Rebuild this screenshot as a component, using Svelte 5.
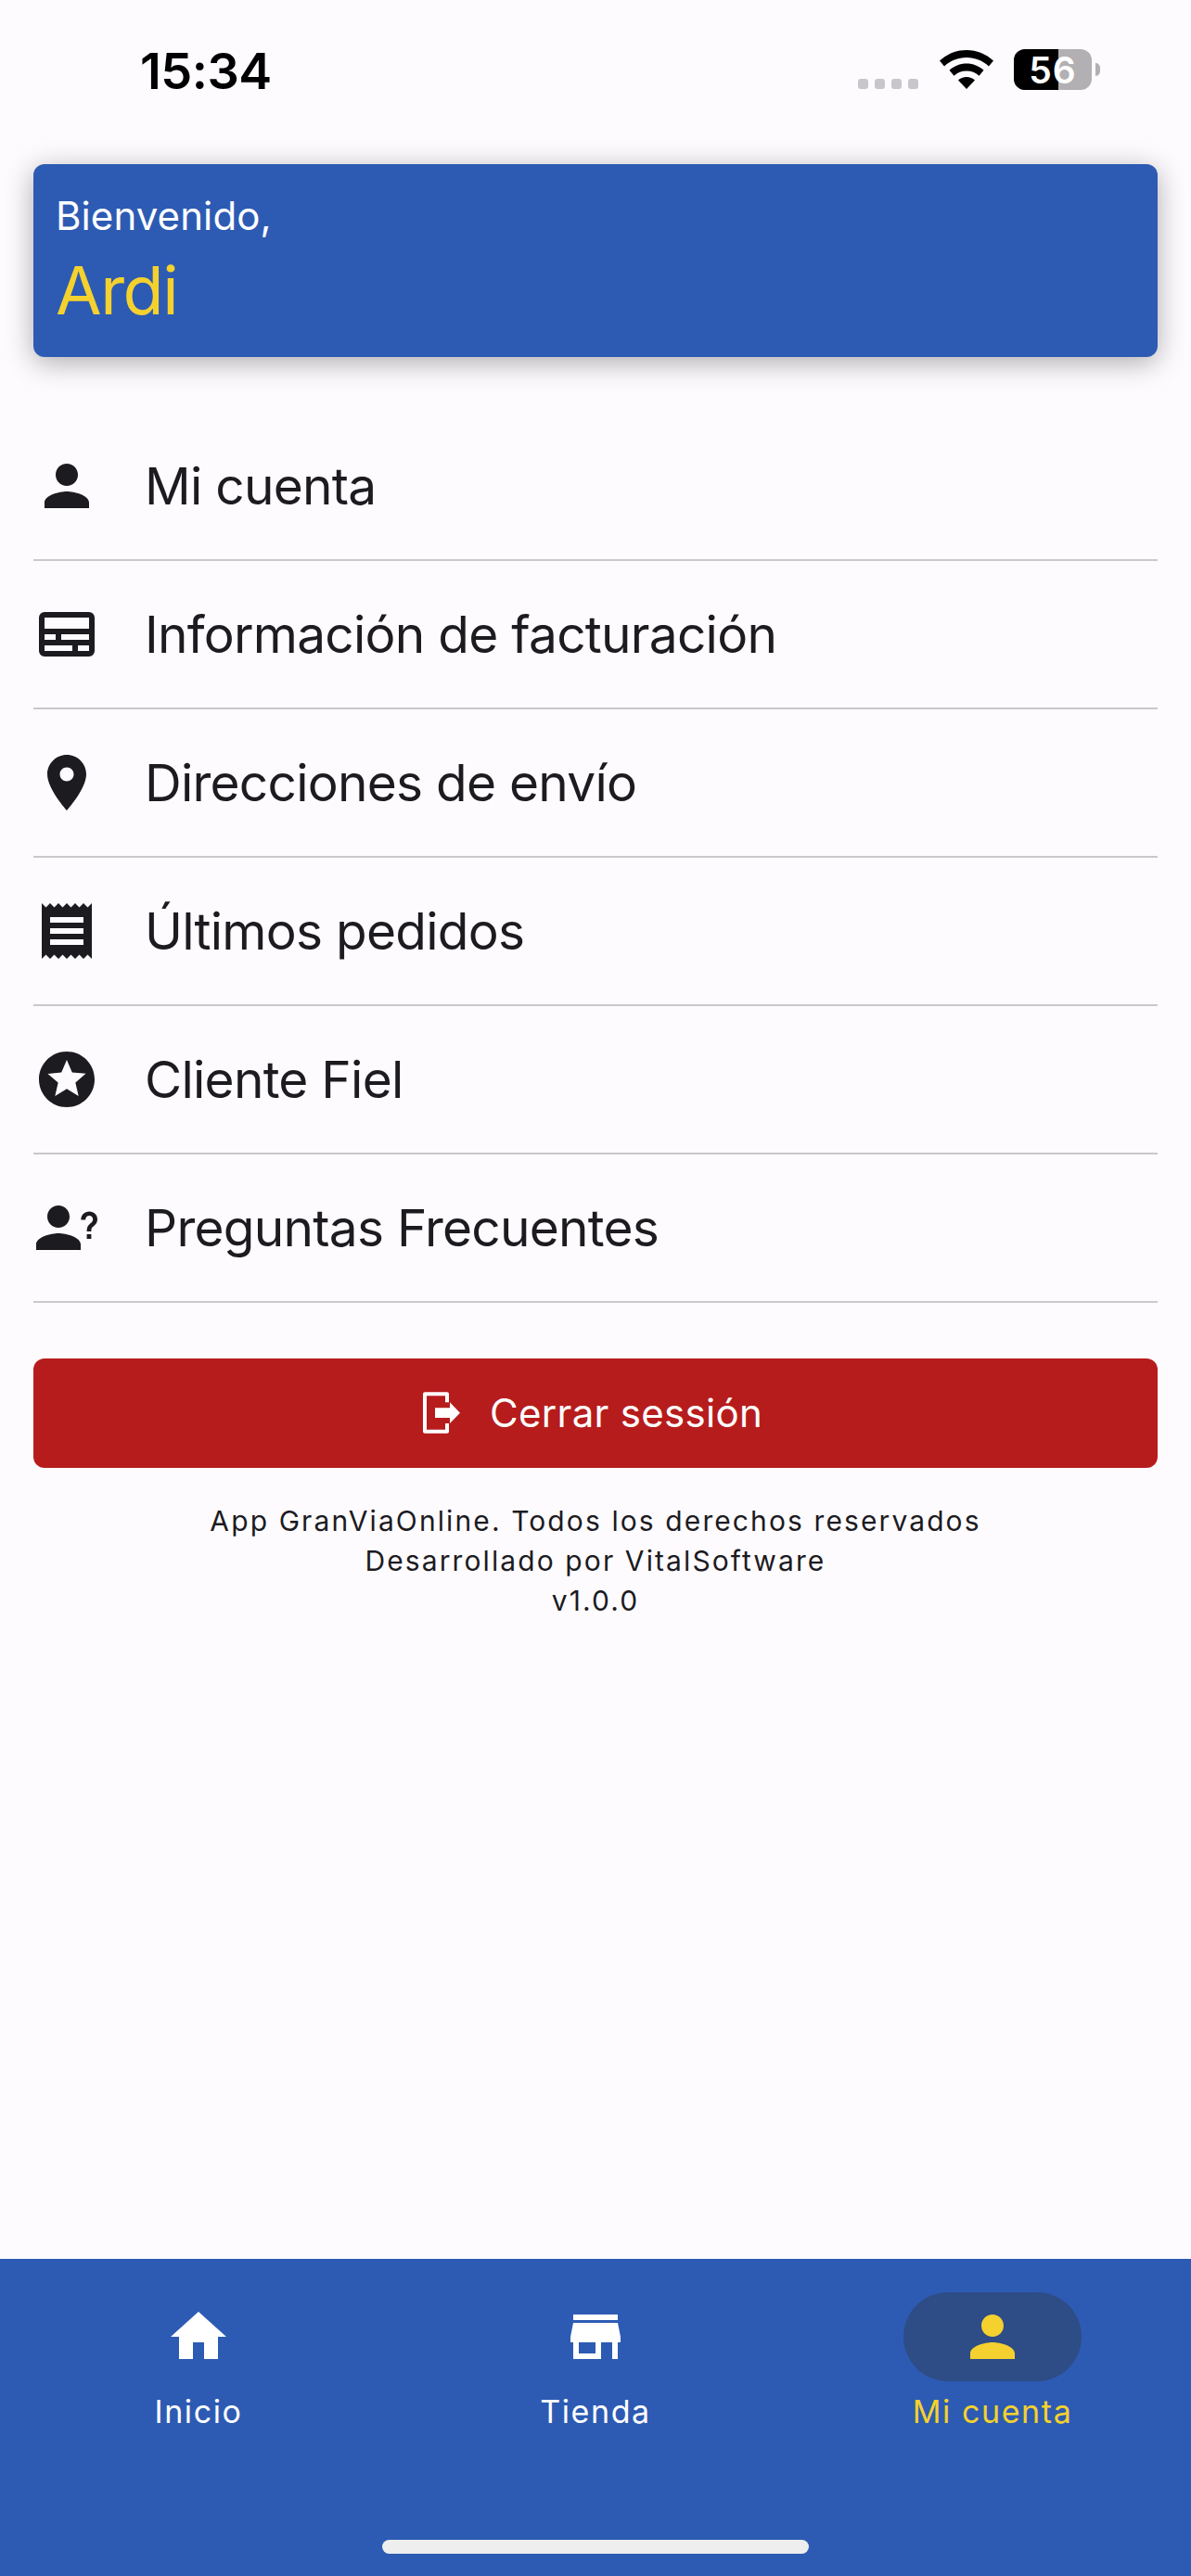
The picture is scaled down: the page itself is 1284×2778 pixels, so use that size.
<script>
  const rows = [
    { label: "Mi cuenta", d: "M12 12c2.21 0 4-1.79 4-4s-1.79-4-4-4-4 1.79-4 4 1.79 4 4 4zm0 2c-2.67 0-8 1.34-8 4v2h16v-2c0-2.66-5.33-4-8-4z" },
    { label: "Información de facturación", d: "M4 4h16a2 2 0 0 1 2 2v12a2 2 0 0 1-2 2H4a2 2 0 0 1-2-2V6a2 2 0 0 1 2-2zm0 2v4h16V6H4zm0 6v2h4v-2H4zm6 0v2h10v-2H10zM4 16v2h10v-2H4zm12 0v2h4v-2h-4z" },
    { label: "Direcciones de envío", d: "M12 2C8.13 2 5 5.13 5 9c0 5.25 7 13 7 13s7-7.75 7-13c0-3.87-3.13-7-7-7zm0 9.5c-1.38 0-2.5-1.12-2.5-2.5s1.12-2.5 2.5-2.5 2.5 1.12 2.5 2.5-1.12 2.5-2.5 2.5z" },
    { label: "Últimos pedidos", d: "M18 17H6v-2h12v2zm0-4H6v-2h12v2zm0-4H6V7h12v2zM3 22l1.5-1.5L6 22l1.5-1.5L9 22l1.5-1.5L12 22l1.5-1.5L15 22l1.5-1.5L18 22l1.5-1.5L21 22V2l-1.5 1.5L18 2l-1.5 1.5L15 2l-1.5 1.5L12 2l-1.5 1.5L9 2 7.5 3.5 6 2 4.5 3.5 3 2v20z" },
    { label: "Cliente Fiel", d: "M11.99 2C6.47 2 2 6.48 2 12s4.47 10 9.99 10C17.52 22 22 17.52 22 12S17.52 2 11.99 2zm4.24 16L12 15.45 7.77 18l1.12-4.81-3.73-3.23 4.92-.42L12 5l1.92 4.53 4.92.42-3.73 3.23L16.23 18z" },
    { label: "Preguntas Frecuentes", d: "M9 12c2.21 0 4-1.79 4-4s-1.79-4-4-4-4 1.79-4 4 1.79 4 4 4zm0 2c-2.67 0-8 1.34-8 4v2h16v-2c0-2.66-5.33-4-8-4zM19.2 14.300h1.600V16h-1.600zM17.100 9.200c0-1.800 1.300-3 3-3 1.700 0 2.900 1.200 2.900 2.800 0 1.100-.6 1.800-1.300 2.400-.7.500-.9.800-.9 1.600v.3h-1.600V13c0-1.300.5-1.900 1.200-2.500.7-.5 1-.9 1-1.500 0-.7-.5-1.300-1.300-1.300s-1.400.6-1.400 1.500h-1.600z" },
  ];

  const tabs = [
    { label: "Inicio", d: "M10 20v-6h4v6h5v-8h3L12 3 2 12h3v8z" },
    { label: "Tienda", d: "M20 4H4v2h16V4zm1 10v-2l-1-5H4l-1 5v2h1v6h10v-6h4v6h2v-6h1zm-9 4H6v-4h6v4z" },
    { label: "Mi cuenta", d: rows[0].d, active: true },
  ];
</script>

<div class="page">
  <header class="status">
    <span class="time">15:34</span>
    <div class="indicators">
      <div class="signal"><i></i><i></i><i></i><i></i></div>
      <svg class="wifi" viewBox="0 0 58 42" aria-hidden="true">
        <path d="M29 0C18 0 8 4.200 0 11.500l5 6C11.500 11.500 20 8 29 8s17.500 3.500 24 9.500l5-6C50 4.200 40 0 29 0zM29 14.500c-7 0-13.500 2.700-18.500 7.200l5 6c3.500-3.300 8.300-5.200 13.500-5.200s10 1.900 13.500 5.200l5-6C42.500 17.200 36 14.500 29 14.500zM29 29c-3.500 0-6.700 1.300-9 3.500L29 42l9-9.500C35.700 30.300 32.500 29 29 29z" />
      </svg>
      <div class="battery">
        <div class="cell"><b class="fill"></b><span>56</span></div>
        <b class="nub"></b>
      </div>
    </div>
  </header>

  <section class="welcome">
    <p class="hello">Bienvenido,</p>
    <p class="name">Ardi</p>
  </section>

  <nav class="menu">
    {#each rows as row}
      <div class="row">
        <svg class="icon" viewBox="0 0 24 24" aria-hidden="true"><path fill-rule="evenodd" d={row.d} /></svg>
        <span>{row.label}</span>
      </div>
    {/each}
  </nav>

  <button class="logout">
    <svg class="logout-icon" viewBox="0 0 120 133" aria-hidden="true">
      <path class="door" d="M78 33V6H6v121h72v-26" />
      <path d="M39 51h48V33l33 34-33 34V83H39z" />
    </svg>
    <span>Cerrar sessión</span>
  </button>

  <footer class="legal">
    <p>App GranViaOnline. Todos los derechos reservados</p>
    <p>Desarrollado por VitalSoftware</p>
    <p>v1.0.0</p>
  </footer>

  <div class="tabbar">
    {#each tabs as tab}
      <div class="tab" class:active={tab.active}>
        <div class="pill">
          <svg class="icon" viewBox="0 0 24 24" aria-hidden="true"><path d={tab.d} /></svg>
        </div>
        <span>{tab.label}</span>
      </div>
    {/each}
    <div class="home-bar"></div>
  </div>
</div>

<style>
  :global(body) {
    margin: 0;
    background: #fefbff;
  }

  .page {
    display: flex;
    flex-direction: column;
    height: 2778px;
    background: #fefbff;
    color: #1c1b1f;
    font-family: Inter, "Liberation Sans", sans-serif;
  }

  p {
    margin: 0;
  }

  .status {
    display: flex;
    flex: none;
    justify-content: space-between;
    align-items: flex-start;
    box-sizing: border-box;
    height: 177px;
    padding: 45px 98px 0 151px;
    color: #000;
  }

  .time {
    font-size: 54px;
    line-height: 64px;
    font-weight: 600;
    letter-spacing: -0.5px;
  }

  .indicators {
    display: flex;
    align-items: flex-start;
    padding-top: 8px;
  }

  .signal {
    display: flex;
    gap: 7px;
    margin: 32px 23px 0 0;
  }

  .signal i {
    width: 11px;
    height: 11px;
    border-radius: 3px;
    background: #c8c6ca;
  }

  .wifi {
    width: 58px;
    height: 42px;
    margin: 1px 22px 0 0;
  }

  .battery {
    display: flex;
    align-items: center;
    gap: 4px;
  }

  .cell {
    position: relative;
    display: flex;
    justify-content: center;
    align-items: center;
    width: 84px;
    height: 44px;
    border-radius: 12px;
    overflow: hidden;
    background: #b2b0b3;
    color: #fff;
    font-size: 39px;
    font-weight: 600;
  }

  .fill {
    position: absolute;
    left: 0;
    top: 0;
    bottom: 0;
    width: 48px;
    background: #000;
  }

  .cell span {
    position: relative;
    letter-spacing: 1px;
  }

  .nub {
    width: 5px;
    height: 14px;
    border-radius: 0 7px 7px 0;
    background: #b2b0b3;
  }

  .welcome {
    flex: none;
    box-sizing: border-box;
    height: 208px;
    margin: 0 36px;
    padding: 28px 25px 0 24px;
    border-radius: 12px;
    background: #2d5bb3;
    box-shadow: 0 6px 30px rgba(0, 0, 0, 0.32);
  }

  .hello {
    color: #fff;
    font-size: 42px;
    line-height: 56px;
    letter-spacing: 0.1px;
  }

  .name {
    margin-top: 8px;
    color: #f4d12e;
    font-size: 72px;
    line-height: 88px;
    letter-spacing: -1.5px;
  }

  .menu {
    flex: none;
    margin: 60px 36px 0;
  }

  .row {
    display: flex;
    align-items: center;
    gap: 48px;
    box-sizing: border-box;
    height: 160px;
    border-bottom: 2px solid #cac7cd;
    font-size: 55px;
    letter-spacing: -0.75px;
  }

  .icon {
    flex: none;
    width: 72px;
    height: 72px;
    fill: currentColor;
  }

  .logout {
    display: flex;
    flex: none;
    justify-content: center;
    align-items: center;
    gap: 32px;
    height: 118px;
    margin: 60px 36px 0;
    padding: 0 6px 2px 0;
    border: 0;
    border-radius: 12px;
    background: #b71c1c;
    color: #fff;
    font: inherit;
    font-size: 42px;
    letter-spacing: 0.3px;
  }

  .logout-icon {
    width: 40px;
    height: 45px;
    fill: #fff;
  }

  .door {
    fill: none;
    stroke: #fff;
    stroke-width: 12;
    stroke-linejoin: round;
  }

  .legal {
    flex: none;
    margin-top: 36px;
    text-align: center;
    font-size: 30px;
    line-height: 43px;
    letter-spacing: 2.1px;
  }

  .tabbar {
    position: relative;
    display: grid;
    grid-template-columns: repeat(3, 1fr);
    box-sizing: border-box;
    height: 342px;
    margin-top: auto;
    padding-top: 36px;
    background: #2d5bb3;
  }

  .tab {
    display: flex;
    flex-direction: column;
    align-items: center;
    color: #fff;
    font-size: 34px;
    letter-spacing: 1.6px;
  }

  .tab.active {
    color: #f4d12e;
  }

  .pill {
    display: flex;
    justify-content: center;
    align-items: center;
    width: 192px;
    height: 96px;
    border-radius: 48px;
    margin-bottom: 12px;
  }

  .tab.active .pill {
    background: #2e4c85;
  }

  .home-bar {
    position: absolute;
    left: 412px;
    bottom: 24px;
    width: 460px;
    height: 15px;
    border-radius: 8px;
    background: #eeeeee;
  }
</style>
